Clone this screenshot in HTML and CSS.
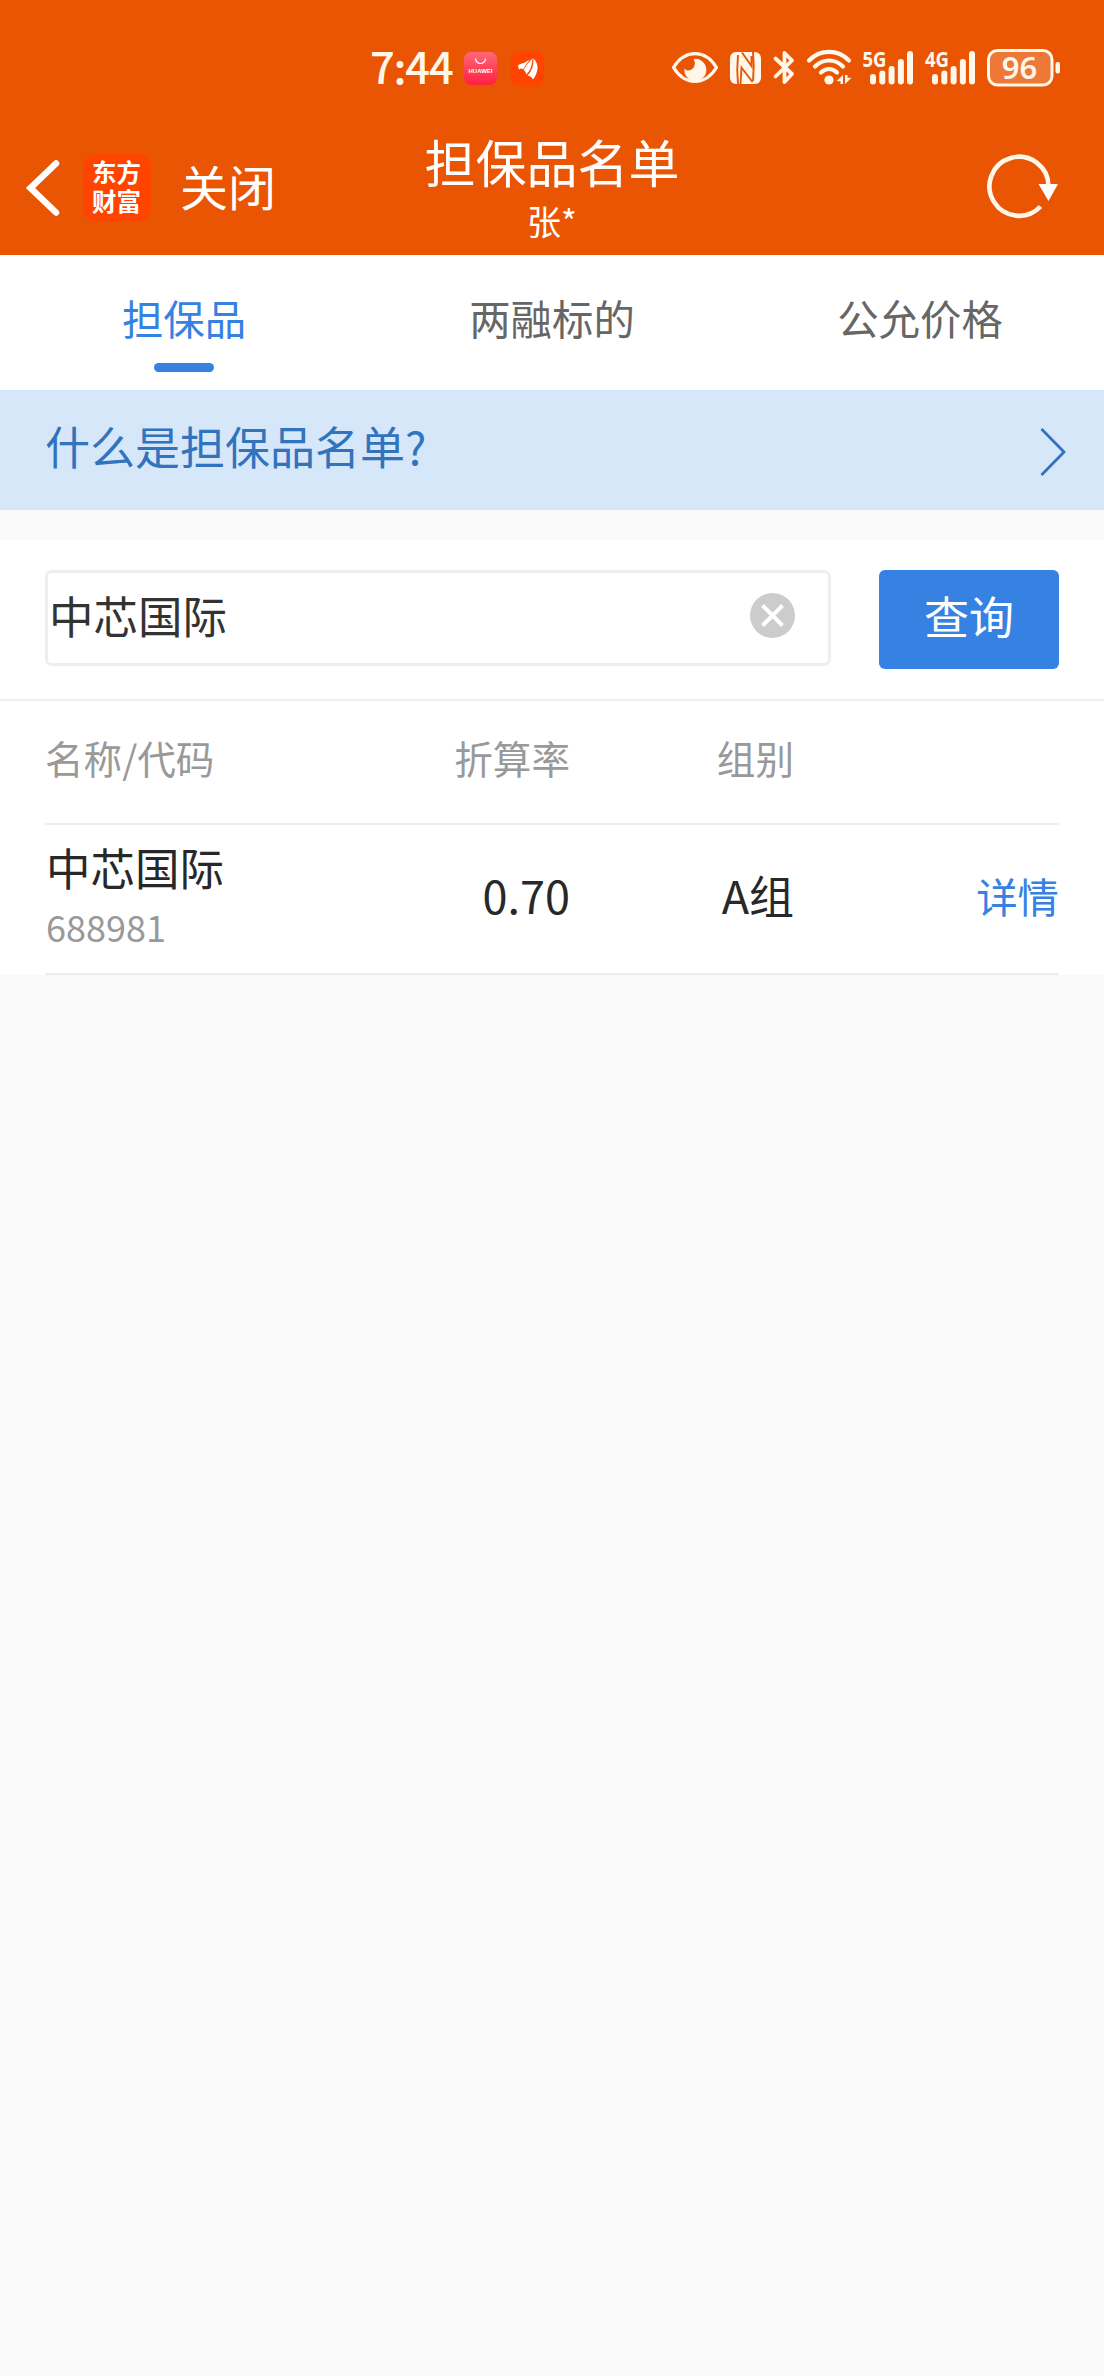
FILE: index.html
```html
<!DOCTYPE html>
<html lang="zh-CN">
<head>
<meta charset="utf-8">
<title>担保品名单</title>
<link rel="stylesheet" href="styles.css">
</head>
<body>
<header class="header">
  <div class="status">
    <span class="time">7:44</span>
    <svg class="app-icon" width="33" height="33" viewBox="0 0 33 33">
      <defs><linearGradient id="pink" x1="0" y1="0" x2="0" y2="1"><stop offset="0" stop-color="#ff6878"/><stop offset="1" stop-color="#ff2042"/></linearGradient></defs>
      <rect width="33" height="33" rx="7" fill="url(#pink)"/>
      <path d="M11.500 6.500a5 5 0 0 0 10 0" fill="none" stroke="#fff" stroke-width="1.200"/>
      <text class="brand" x="16.500" y="20.500" text-anchor="middle" textLength="24" lengthAdjust="spacingAndGlyphs">HUAWEI</text>
    </svg>
    <svg class="app-icon" width="33" height="33" viewBox="0 0 33 33">
      <rect width="33" height="33" rx="7" fill="#ff4400"/>
      <path d="M7 13.500C9 11.500 14 11.500 18.500 7.500C16.500 11 14 13 12.500 17.500C11.500 16 9.500 16 8.500 17.500C7.500 16.500 7 15 7 13.500Z M13 18.500C14 13.500 18 11 21.500 6C21 12 20.500 18 15 22.500C15 20.500 14.500 19 13 18.500Z M16.500 23.500C21 19 22.500 14 22.500 6.500C26 10 27.500 14 26 19.500C25 22.500 24 25 22 27.500C21 25 19 24 16.500 23.500Z" fill="#fff"/>
    </svg>
    <svg class="indicators" width="400" height="80" viewBox="660 28 400 80">
      <g fill="none" stroke="#fff7ea" stroke-width="3.200">
        <path d="M673.500 67.500C679 58.500 687 53.600 695 53.600S711 58.500 716.500 67.500C711 76.500 703 81.400 695 81.400S679 76.500 673.500 67.500Z" stroke-linejoin="round"/>
        <path d="M775.500 58.500L792 74L784.500 82V53L792 60.500L775.500 76.500" stroke-width="3.800" stroke-linecap="round" stroke-linejoin="round"/>
        <path d="M809 60.500C820 49 838 49 849 60.500M815 66.500C823 58.500 835 58.500 843 66.500M821 72.500C826 68 832 68 837 72.500" stroke-width="4.200" stroke-linecap="round"/>
      </g>
      <g fill="#fff7ea">
        <path d="M693.500 59A11 11 0 1 1 684.500 68C685 69.500 686 70.500 688 70.500C693.500 70.500 697 64 693.500 59Z"/>
        <rect x="730" y="52" width="31" height="32" rx="6"/>
        <circle cx="829" cy="80" r="4.600"/>
        <path d="M843 75v9h-2.500v-2.800h-4zM845 75h2.500v2.800h4L845 84z"/>
        <rect x="870" y="74" width="6" height="10.500" rx="3"/><rect x="879.300" y="70.500" width="6" height="14" rx="3"/><rect x="888.600" y="66" width="6" height="18.500" rx="3"/><rect x="897.900" y="59" width="6" height="25.500" rx="3"/><rect x="907" y="51" width="6" height="33.500" rx="3"/>
        <rect x="932" y="74" width="6" height="10.500" rx="3"/><rect x="941.300" y="70.500" width="6" height="14" rx="3"/><rect x="950.600" y="66" width="6" height="18.500" rx="3"/><rect x="959.900" y="59" width="6" height="25.500" rx="3"/><rect x="969" y="51" width="6" height="33.500" rx="3"/>
        <rect x="1055.500" y="62" width="4.500" height="11.500" rx="2"/>
      </g>
      <path d="M738 55Q736.500 70 738 84M753 81Q754.500 66 753 52M742 52.500L751.500 66V56M740.500 84L741.500 67.500L752.500 82" fill="none" stroke="#ea5504" stroke-width="1.900"/>
      <rect x="988.500" y="50.500" width="63.500" height="34.500" rx="9" fill="#ed7837" stroke="#fff7ea" stroke-width="3"/>
      <text class="network" x="862.500" y="67" textLength="24" lengthAdjust="spacingAndGlyphs">5G</text>
      <text class="network" x="925" y="67" textLength="24" lengthAdjust="spacingAndGlyphs">4G</text>
      <text class="battery" x="1019.500" y="79" text-anchor="middle">96</text>
    </svg>
  </div>
  <nav class="nav">
    <div class="nav-left">
      <svg class="back" width="36" height="58" viewBox="0 0 36 58"><path d="M31 4.500L5.500 29L31 53.500" fill="none" stroke="#fff" stroke-width="6.500" stroke-linecap="round" stroke-linejoin="miter"/></svg>
      <div class="logo">东方财富</div>
      <span class="close">关闭</span>
    </div>
    <div class="heading"><h1>担保品名单</h1><p>张*</p></div>
    <svg class="refresh" width="74" height="68" viewBox="0 0 74 68"><path d="M55.500 53.500A29.500 29.500 0 1 1 63.500 33" fill="none" stroke="#fff7ea" stroke-width="4.600"/><path d="M53.500 31h19.500l-9.500 17z" fill="#fff"/></svg>
  </nav>
</header>
<div class="tabs">
  <div class="tab active">担保品</div>
  <div class="tab">两融标的</div>
  <div class="tab">公允价格</div>
</div>
<div class="notice">
  <span>什么是担保品名单?</span>
  <svg width="28" height="50" viewBox="0 0 28 50"><path d="M2.500 2L25 25L2.500 48" fill="none" stroke="#3273be" stroke-width="2.800"/></svg>
</div>
<main class="panel">
  <div class="search">
    <div class="field">
      <span>中芯国际</span>
      <svg width="45" height="45" viewBox="0 0 45 45"><circle cx="22.500" cy="22.500" r="22.500" fill="#ccc"/><path d="M12.500 12.500L32.500 32.500M32.500 12.500L12.500 32.500" stroke="#fff" stroke-width="4"/></svg>
    </div>
    <div class="submit">查询</div>
  </div>
  <div class="table">
    <div class="row head"><span>名称/代码</span><span class="num">折算率</span><span class="num">组别</span><span></span></div>
    <div class="row item">
      <div class="stock"><span class="name">中芯国际</span><span class="code">688981</span></div>
      <span class="num">0.70</span><span class="num">A组</span><span class="detail">详情</span>
    </div>
  </div>
</main>
</body>
</html>
```
FILE: styles.css
```css
* { box-sizing: border-box; }
body { margin: 0; min-height: 2376px; background: #f9f9f9; color: #282828; font-family: "Noto Sans CJK SC", sans-serif; font-size: 45px; }
h1, p { margin: 0; font-weight: 400; }
svg { display: block; flex: none; }
.header { height: 255px; background: #ea5504; color: #fff; }
.status { display: flex; align-items: center; height: 136px; padding-left: 370px; padding-right: 44px; }
.time { width: 94px; font: 500 43.5px/60px "Noto Sans CJK SC", sans-serif; letter-spacing: -1.2px; color: #fff7ea; margin-top: -5px; }
.app-icon { margin-right: 14px; margin-top: 1px; }
.indicators { margin-left: auto; }
.brand { font: 700 6px "Liberation Sans", sans-serif; fill: #fff; }
.network { font: 700 21px "Noto Sans", sans-serif; fill: #fff7ea; }
.battery { font: 600 31px "Noto Sans", sans-serif; fill: #fff7ea; }
.nav { display: grid; grid-template-columns: 1fr auto 1fr; height: 119px; }
.nav-left { display: flex; align-items: center; height: 103px; padding-left: 25px; }
.logo { width: 68px; height: 68px; margin-left: 22px; padding: 3px 9px 0; border-radius: 14px; background: #ff4400; font-weight: 700; font-size: 24.5px; line-height: 29px; }
.close { margin-left: 29px; font-size: 48px; line-height: 60px; margin-top: -6px; }
.heading { text-align: center; }
.heading h1 { font-size: 51px; line-height: 60px; margin-top: -5px; }
.heading p { font-size: 34px; line-height: 40px; margin-top: 10px; }
.refresh { justify-self: end; margin: 17px 45px 0 0; }
.tabs { display: grid; grid-template-columns: repeat(3, 1fr); height: 135px; background: #fff; }
.tab { display: flex; flex-direction: column; align-items: center; padding-top: 32px; font-size: 41.4px; line-height: 60px; color: #666; }
.active { color: #3682e2; }
.active::after { content: ""; width: 60px; height: 9px; margin-top: 16px; border-radius: 5px; background: #3682e2; }
.notice { display: flex; justify-content: space-between; align-items: center; height: 120px; padding: 0 37px 0 45px; background: #d6e7f9; color: #3273be; line-height: 60px; }
.notice span { margin-top: -9px; }
.notice svg { margin-top: 4px; }
.panel { margin-top: 30px; background: #fff; }
.search { display: flex; justify-content: space-between; align-items: flex-start; height: 161px; padding: 30px 45px 0; border-bottom: 2px solid #eee; }
.field { display: flex; justify-content: space-between; align-items: center; width: 786px; height: 96px; padding: 0 33px 5px 1px; border: 3px solid #eee; border-radius: 7px; color: #333; font-size: 44.5px; line-height: 60px; }
.field span { margin-top: -1px; }
.submit { width: 180px; height: 99px; border-radius: 6px; background: #3682e2; color: #fff; text-align: center; line-height: 92px; }
.table { padding: 0 45px; }
.row { display: grid; grid-template-columns: 305px 220px 224px 265px; align-items: center; border-bottom: 2px solid #eee; }
.head { height: 124px; padding-bottom: 10px; color: #999; font-size: 38.6px; }
.num { text-align: right; }
.item { height: 150px; line-height: 60px; }
.item .num, .detail { margin-top: -9px; }
.stock { display: flex; flex-direction: column; height: 148px; padding: 12px 0 0 1px; }
.name { font-size: 44.5px; }
.code { color: #999; font-size: 36px; line-height: 50px; margin-top: 4px; }
.detail { font-size: 41.4px; color: #3682e2; text-align: right; }
```
